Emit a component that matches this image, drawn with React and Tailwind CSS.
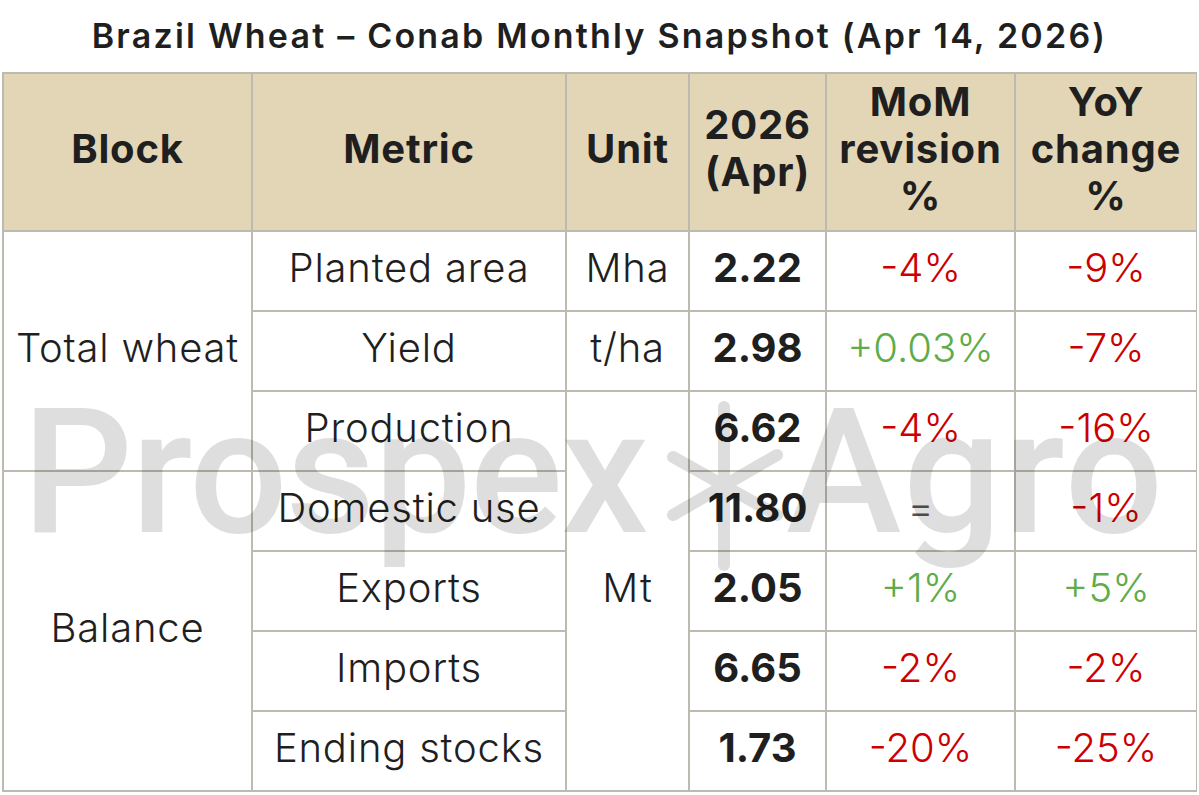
import React from "react";

const rows = [
  { block: "Total wheat", span: 3, metric: "Planted area", unit: "Mha", value: "2.22", mom: "-4%", momC: "red", yoy: "-9%", yoyC: "red" },
  { metric: "Yield", unit: "t/ha", value: "2.98", mom: "+0.03%", momC: "green", yoy: "-7%", yoyC: "red" },
  { metric: "Production", unit: "Mt", unitSpan: 5, value: "6.62", mom: "-4%", momC: "red", yoy: "-16%", yoyC: "red" },
  { block: "Balance", span: 4, metric: "Domestic use", value: "11.80", mom: "=", momC: "grey", yoy: "-1%", yoyC: "red" },
  { metric: "Exports", value: "2.05", mom: "+1%", momC: "green", yoy: "+5%", yoyC: "green" },
  { metric: "Imports", value: "6.65", mom: "-2%", momC: "red", yoy: "-2%", yoyC: "red" },
  { metric: "Ending stocks", value: "1.73", mom: "-20%", momC: "red", yoy: "-25%", yoyC: "red" },
];

const tone = {
  red: "text-[#cc0000]",
  green: "text-[#5fac4a]",
  grey: "text-[#555]",
};

function Head({ children }) {
  return (
    <div className="bg-[#e3d6b6] flex items-center justify-center pb-[8px] text-center font-bold text-[40px] leading-[47px] tracking-[0.02em]">
      {children}
    </div>
  );
}

function Cell({ children, className = "" }) {
  return (
    <div className={`bg-white flex items-center justify-center pb-[6px] text-center text-[40px] ${className}`}>
      {children}
    </div>
  );
}

function Watermark() {
  return (
    <div className="absolute inset-0 pointer-events-none font-['Roboto',sans-serif] font-medium text-[174px] leading-none tracking-[-0.01em] text-black/[0.13]">
      <span className="absolute left-[22px] top-[386px]">Prospex</span>
      <span className="absolute left-[786px] top-[386px] tracking-[0.01em]">Agro</span>
      <svg className="absolute left-[660px] top-[395px]" width="130" height="182" viewBox="0 0 130 182">
        <g opacity="0.13" stroke="#000" strokeWidth="12" strokeLinecap="round">
          <line x1="64" y1="12" x2="64" y2="170" />
          <line x1="13" y1="62" x2="117" y2="120" />
          <line x1="13" y1="120" x2="117" y2="60" />
        </g>
      </svg>
    </div>
  );
}

export default function App() {
  return (
    <div className="relative w-[1199px] h-[795px] bg-white text-[#1f1f1f] font-['Inter',sans-serif]">
      <h1 className="h-[72px] flex items-center justify-center pb-[2px] text-[34px] font-semibold tracking-[0.065em]">
        Brazil Wheat – Conab Monthly Snapshot (Apr 14, 2026)
      </h1>
      <div className="mx-[2px] grid grid-cols-[247px_312px_121px_135px_187px_180px] grid-rows-[156px_repeat(7,78px)] gap-[2px] p-[2px] bg-[#bdbab2]">
        <Head>Block</Head>
        <Head>Metric</Head>
        <Head>Unit</Head>
        <Head>
          2026
          <br />
          (Apr)
        </Head>
        <Head>
          MoM
          <br />
          revision
          <br />%
        </Head>
        <Head>
          YoY
          <br />
          change
          <br />%
        </Head>
        {rows.map((r) => (
          <React.Fragment key={r.metric}>
            {r.block && (
              <Cell className={`font-light tracking-[0.02em] ${r.span === 3 ? "row-span-3" : "row-span-4"}`}>
                {r.block}
              </Cell>
            )}
            <Cell className="font-light tracking-[0.02em]">{r.metric}</Cell>
            {r.unit && (
              <Cell className={`font-light tracking-[0.02em] ${r.unitSpan ? "row-span-5" : ""}`}>{r.unit}</Cell>
            )}
            <Cell className="font-bold">{r.value}</Cell>
            <Cell className={`font-light ${tone[r.momC]}`}>{r.mom}</Cell>
            <Cell className={`font-light ${tone[r.yoyC]}`}>{r.yoy}</Cell>
          </React.Fragment>
        ))}
      </div>
      <Watermark />
    </div>
  );
}
